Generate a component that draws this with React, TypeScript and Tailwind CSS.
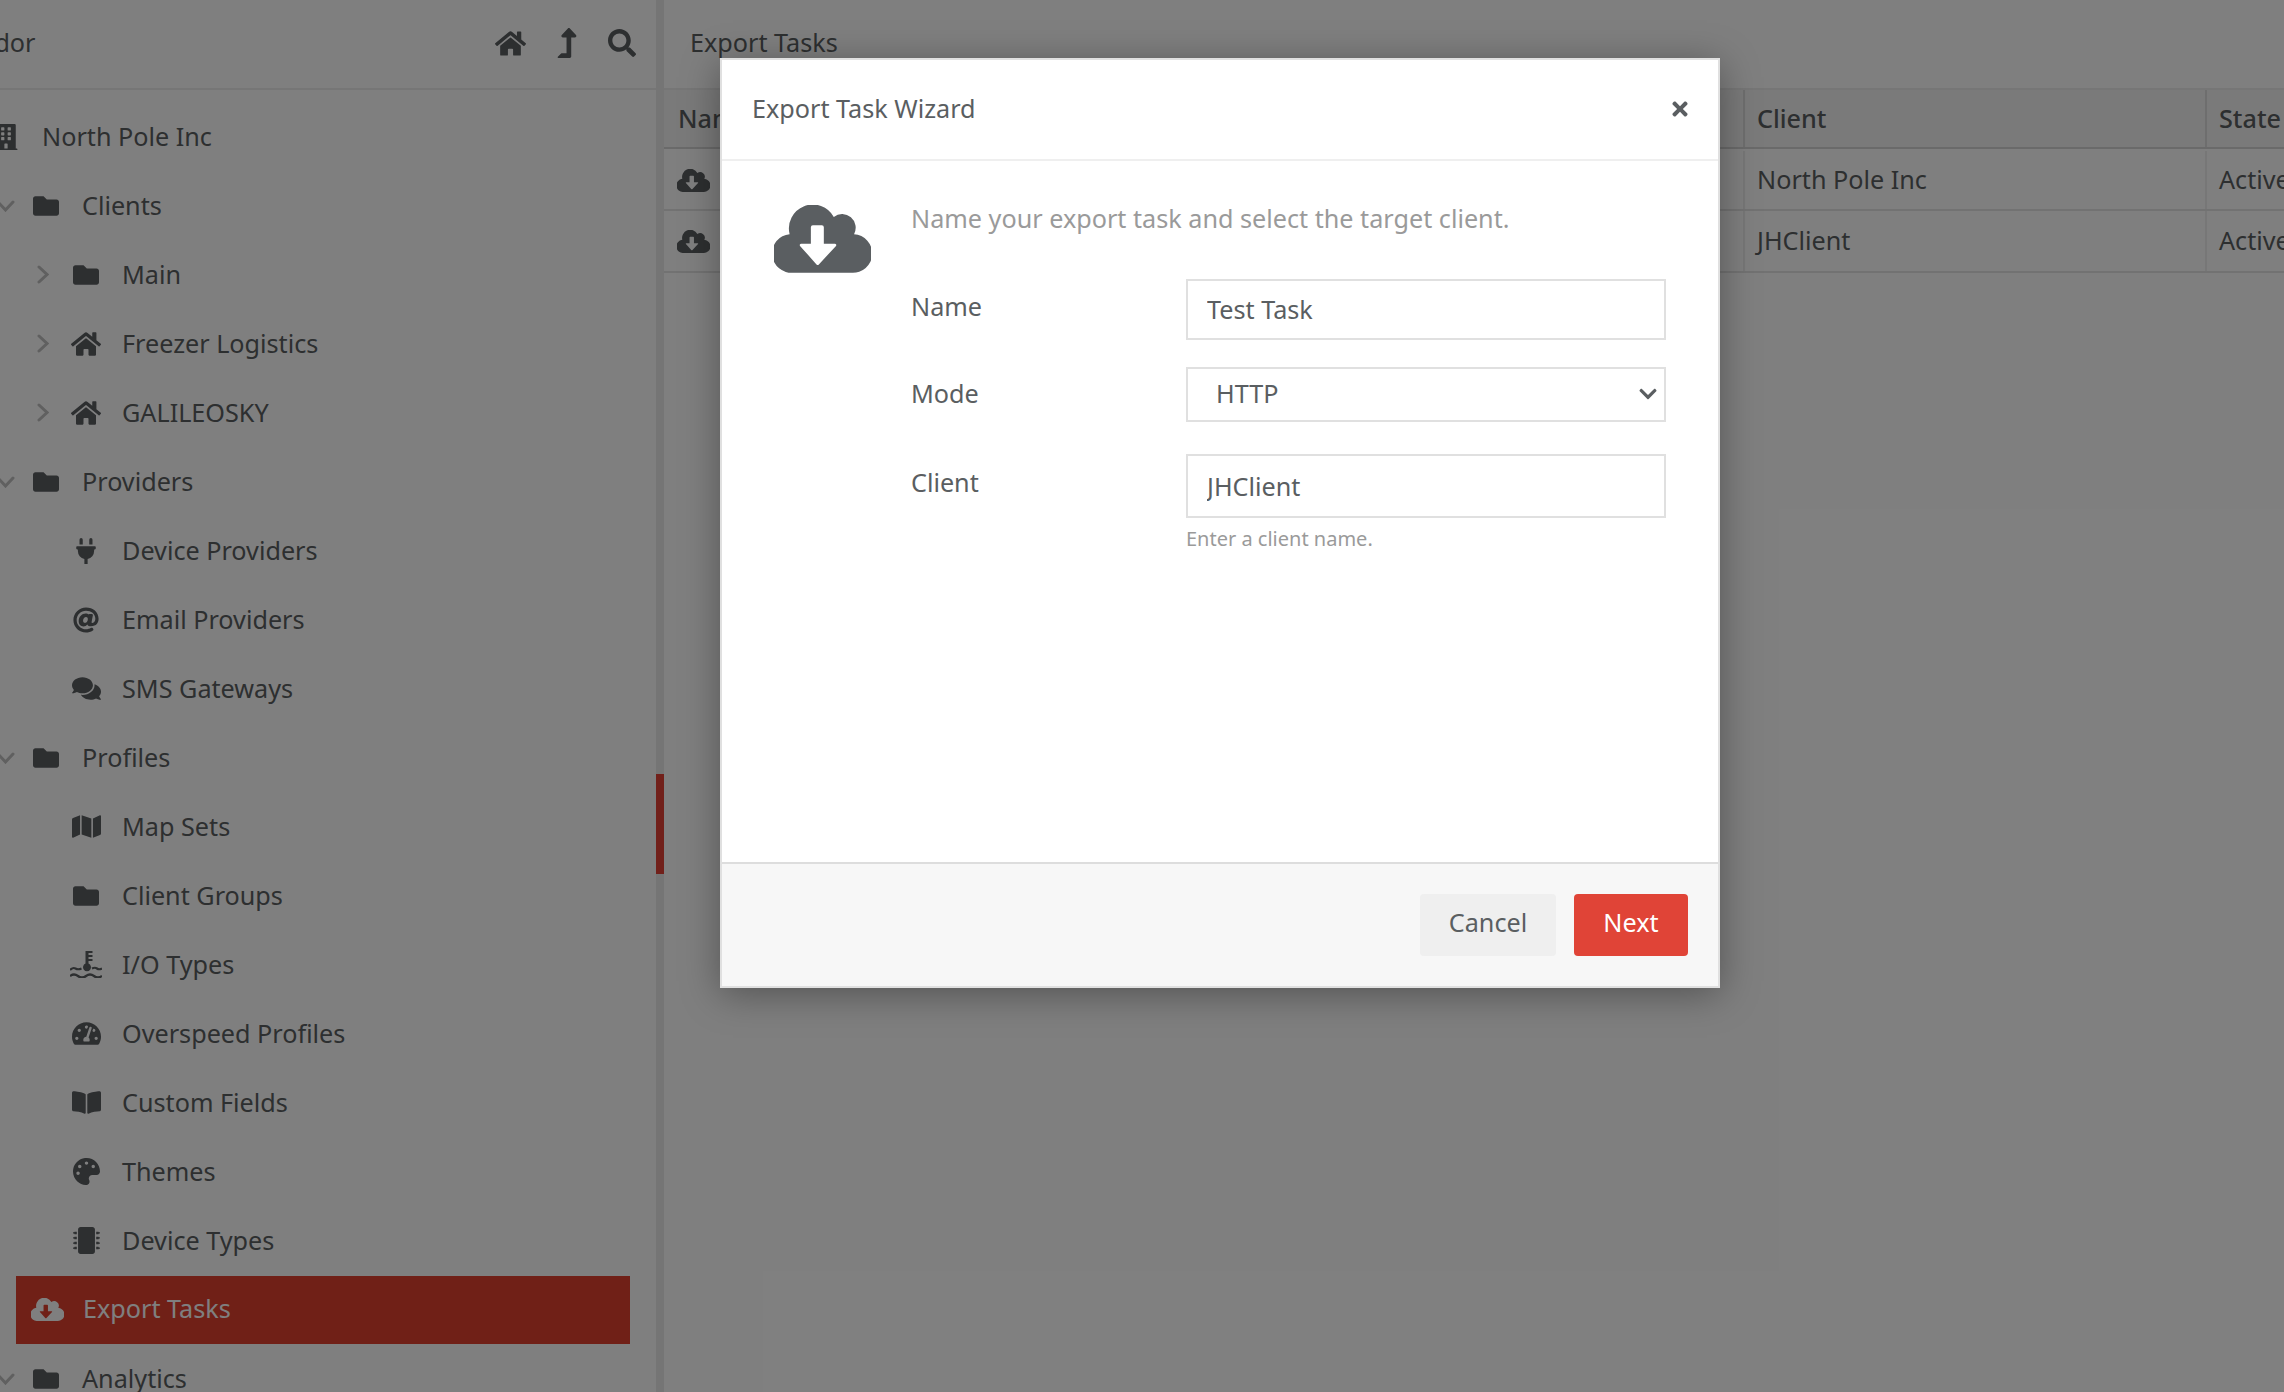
import React from "react";
import type { IconType } from "react-icons";
import {
  FaAt,
  FaBookOpen,
  FaBuilding,
  FaChevronDown,
  FaComments,
  FaFolder,
  FaHome,
  FaLevelUpAlt,
  FaMap,
  FaMicrochip,
  FaPalette,
  FaPlug,
  FaSearch,
  FaTachometerAlt,
  FaTimes,
} from "react-icons/fa";

// cloud with the arrow cut out, so the background shows through it
const CloudIcon: IconType = (props) => (
  <svg viewBox="0 0 292 203" fill="currentColor" fillRule="evenodd" className={props.className}>
    <path d="M58 203A58 58 0 0 1 47 87A72 72 0 0 1 180 35A41 41 0 0 1 241 87A58 58 0 0 1 234 203Z M117 60h27a6 6 0 0 1 6 6v50h33a4 4 0 0 1 3 7L135 178a5 5 0 0 1-7 0L79 123a4 4 0 0 1 3-7h29v-50a6 6 0 0 1 6-6z" />
  </svg>
);

const IoIcon: IconType = (props) => (
  <svg viewBox="0 0 32 27" className={props.className}>
    <path fill="currentColor" d="M15.500 0h3v12.600a4 4 0 1 1-3 0zM18.500 0h4v2h-4zM18.500 4h4v2h-4zM18.500 8h4v2h-4z" />
    <path fill="none" stroke="currentColor" strokeWidth="2.200" d="M0 19q3-3 5.500-1.500t6 0M22 17.500q3-1.500 5 0t5 0M0 25q4-3 8 0t8 0t8 0t8 0" />
  </svg>
);

const ArrowRight = () => (
  <svg viewBox="0 0 12 19" className="h-[19px] w-3" fill="none" stroke="currentColor" strokeWidth="3" strokeLinecap="round">
    <path d="M2 2l8 7.500l-8 7.500" />
  </svg>
);

const ArrowDown = () => (
  <svg viewBox="0 0 19 12" className="ml-[5px] h-3 w-[19px] shrink-0" fill="none" stroke="currentColor" strokeWidth="3" strokeLinecap="round">
    <path d="M2 2l7.500 8l7.500-8" />
  </svg>
);

type Item = {
  label: string;
  icon: IconType;
  level: 0 | 1 | 2;
  arrow?: "open" | "closed";
  iconSize: string;
};

const tree: Item[] = [
  { label: "North Pole Inc", icon: FaBuilding, level: 0, iconSize: "text-[26px]" },
  { label: "Clients", icon: FaFolder, level: 1, arrow: "open", iconSize: "text-[26px]" },
  { label: "Main", icon: FaFolder, level: 2, arrow: "closed", iconSize: "text-[26px]" },
  { label: "Freezer Logistics", icon: FaHome, level: 2, arrow: "closed", iconSize: "text-[30px]" },
  { label: "GALILEOSKY", icon: FaHome, level: 2, arrow: "closed", iconSize: "text-[30px]" },
  { label: "Providers", icon: FaFolder, level: 1, arrow: "open", iconSize: "text-[26px]" },
  { label: "Device Providers", icon: FaPlug, level: 2, iconSize: "text-[26px]" },
  { label: "Email Providers", icon: FaAt, level: 2, iconSize: "text-[26px]" },
  { label: "SMS Gateways", icon: FaComments, level: 2, iconSize: "text-[29px]" },
  { label: "Profiles", icon: FaFolder, level: 1, arrow: "open", iconSize: "text-[26px]" },
  { label: "Map Sets", icon: FaMap, level: 2, iconSize: "text-[29px]" },
  { label: "Client Groups", icon: FaFolder, level: 2, iconSize: "text-[26px]" },
  { label: "I/O Types", icon: IoIcon, level: 2, iconSize: "h-[27px] w-[32px]" },
  { label: "Overspeed Profiles", icon: FaTachometerAlt, level: 2, iconSize: "text-[29px]" },
  { label: "Custom Fields", icon: FaBookOpen, level: 2, iconSize: "text-[29px]" },
  { label: "Themes", icon: FaPalette, level: 2, iconSize: "text-[27px]" },
  { label: "Device Types", icon: FaMicrochip, level: 2, iconSize: "text-[27px]" },
];

const indent = { 0: "-ml-[52px]", 1: "-ml-[12px]", 2: "ml-[28px]" };

function Row({ item }: { item: Item }) {
  const Icon = item.icon;
  return (
    <div className={`flex h-[69px] shrink-0 items-center pb-[2px] ${indent[item.level]}`}>
      <span className="flex w-[30px] justify-center text-[#c0c0c0]">
        {item.arrow === "open" && <ArrowDown />}
        {item.arrow === "closed" && <ArrowRight />}
      </span>
      <span className="flex w-[56px] justify-center text-[#5a5e61]">
        <Icon className={item.iconSize} />
      </span>
      <span className="ml-2 whitespace-nowrap">{item.label}</span>
    </div>
  );
}

function Sidebar() {
  return (
    <aside className="flex w-[656px] shrink-0 flex-col overflow-hidden">
      <div className="flex h-[90px] shrink-0 items-center justify-between border-b-2 border-[#ececec] pb-[2px] pr-[20px]">
        <span className="-ml-[50px]">Vendor</span>
        <div className="flex items-center gap-[26px] text-[#5a5e61]">
          <FaHome className="text-[31px]" />
          <FaLevelUpAlt className="text-[30px]" />
          <FaSearch className="text-[28px]" />
        </div>
      </div>
      <div className="flex flex-col pt-[13px]">
        {tree.map((item) => (
          <Row key={item.label} item={item} />
        ))}
        <div className="ml-4 flex h-[68px] w-[614px] shrink-0 items-center bg-[#e0402f] pb-[2px] text-white">
          <span className="flex w-[62px] justify-center">
            <CloudIcon className="h-[23px] w-[33px]" />
          </span>
          <span className="ml-[5px]">Export Tasks</span>
        </div>
        <div className="mt-px">
          <Row item={{ label: "Analytics", icon: FaFolder, level: 1, arrow: "open", iconSize: "text-[26px]" }} />
        </div>
      </div>
    </aside>
  );
}

function TaskRow({ client, className }: { client: string; className?: string }) {
  return (
    <div className={`grid h-[62px] grid-cols-[1079px_462px_1fr] border-b-2 border-[#e4e4e4] ${className ?? ""}`}>
      <div className="flex items-center pl-[13px] text-[#5a5e61]">
        <CloudIcon className="h-[23px] w-[33px]" />
      </div>
      <div className="flex items-center border-l-2 border-[#efefef] pl-3">{client}</div>
      <div className="flex items-center border-l-2 border-[#efefef] pl-3">Active</div>
    </div>
  );
}

function Main() {
  return (
    <main className="flex min-w-0 flex-1 flex-col">
      <div className="flex h-[90px] shrink-0 items-center border-b-2 border-[#ececec] pb-[2px] pl-[26px]">Export Tasks</div>
      <div className="grid h-[59px] grid-cols-[1079px_462px_1fr] border-b-2 border-[#d4d4d4] bg-[#f5f5f5] font-medium">
        <div className="flex items-center pl-[14px]">Name</div>
        <div className="flex items-center border-l-2 border-[#dddddd] pl-3">Client</div>
        <div className="flex items-center border-l-2 border-[#dddddd] pl-3">State</div>
      </div>
      <TaskRow client="North Pole Inc" className="pt-[2px]" />
      <TaskRow client="JHClient" />
    </main>
  );
}

function Modal() {
  const field =
    "h-full w-full border-2 border-[#e0e0e0] bg-white pl-[19px] text-[#5a5e61] outline-none";
  return (
    <div className="absolute left-[720px] top-[58px] flex h-[930px] w-[1000px] flex-col border-2 border-[#e0e0e0] bg-white shadow-[0_6px_36px_rgba(0,0,0,0.35)]">
      <div className="flex h-[101px] shrink-0 items-center justify-between border-b-2 border-[#efefef] pb-[2px] pl-[30px] pr-[27px]">
        <span>Export Task Wizard</span>
        <FaTimes className="text-[22px]" />
      </div>
      <div className="flex flex-1 pl-[52px] pr-[52px] pt-[39px]">
        <CloudIcon className="mr-[40px] mt-[5px] h-[68px] w-[97px] shrink-0 text-[#5a5e61]" />
        <div className="flex-1">
          <p className="text-[#9a9a9a]">Name your export task and select the target client.</p>
          <div className="mt-[41px] grid grid-cols-[275px_1fr] items-center">
            <label className="pb-1">Name</label>
            <div className="h-[61px]">
              <input className={field} defaultValue="Test Task" />
            </div>
            <label className="mt-[27px]">Mode</label>
            <div className="relative mt-[27px] h-[55px]">
              <select
                className="h-full w-full appearance-none border-2 border-[#e0e0e0] bg-white pl-[28px] text-[#5a5e61] outline-none"
                defaultValue="HTTP"
              >
                <option>HTTP</option>
              </select>
              <FaChevronDown className="pointer-events-none absolute right-2 top-[17px] text-[20px] text-[#5a5e61]" />
            </div>
            <label className="mt-[32px] pb-[6px]">Client</label>
            <div className="mt-[32px] h-[64px]">
              <input className={field} defaultValue="JHClient" />
            </div>
            <span />
            <span className="mt-[6px] text-[20px] text-[#9a9a9a]">Enter a client name.</span>
          </div>
        </div>
      </div>
      <div className="flex h-[124px] shrink-0 items-center justify-end gap-[18px] border-t-2 border-[#dddddd] bg-[#f7f7f7] pr-[30px]">
        <button className="h-[62px] w-[136px] rounded bg-[#efefef] pb-1 text-[#5a5e61]">Cancel</button>
        <button className="h-[62px] w-[114px] rounded bg-[#e04437] pb-1 text-white">Next</button>
      </div>
    </div>
  );
}

export default function App() {
  return (
    <div className="relative flex h-screen w-full overflow-hidden bg-white font-['Noto_Sans',sans-serif] text-[25.2px] text-[#5a5e61]">
      <Sidebar />
      <div className="w-2 shrink-0 bg-[#ebebeb]">
        <div className="mt-[774px] h-[100px] bg-[#e34035]" />
      </div>
      <Main />
      <div className="absolute inset-0 bg-black/50" />
      <Modal />
    </div>
  );
}
